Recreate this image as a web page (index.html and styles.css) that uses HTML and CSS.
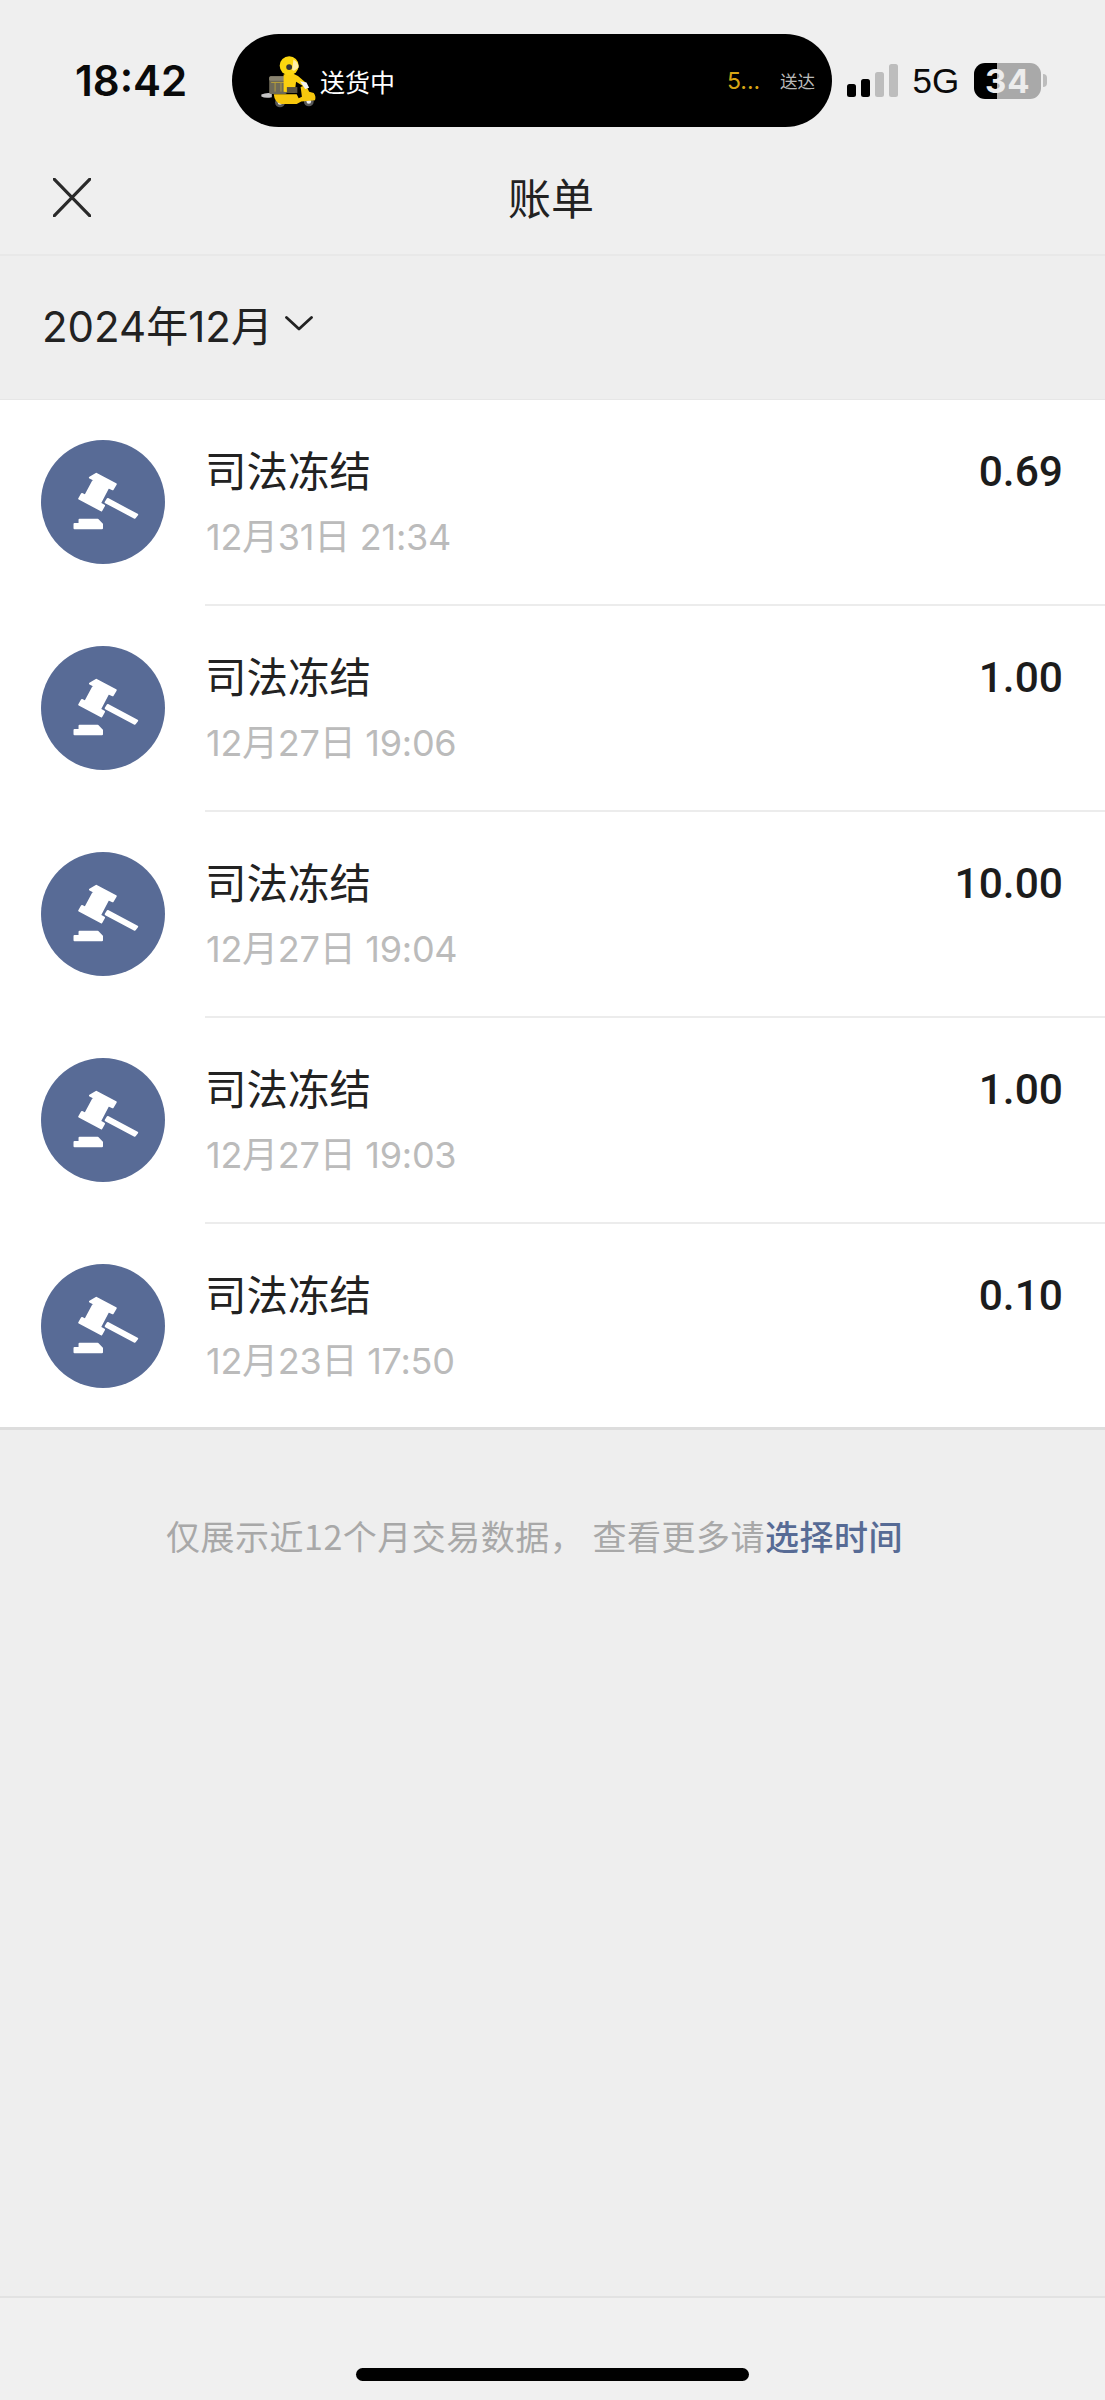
FILE: index.html
```html
<!DOCTYPE html>
<html lang="zh-CN">
<head>
<meta charset="utf-8">
<title>账单</title>
<link rel="stylesheet" href="styles.css">
</head>
<body>
<div class="page">
  <header class="top">
    <div class="status">
      <span class="clock">18:42</span>
      <div class="island">
        <svg class="rider" viewBox="55 95 175 165" aria-hidden="true">
          <path d="M58 219q14-7 32-4v12q-20 4-32-2z" fill="#c4c4c4"/>
          <rect x="82" y="163" width="54" height="54" rx="5" fill="#6e6a58"/>
          <rect x="82" y="163" width="54" height="14" rx="5" fill="#8a8470"/>
          <path d="M88 182h42M100 182v28M118 182v28" stroke="#b79f3a" stroke-width="3" fill="none"/>
          <circle cx="115" cy="243" r="15" fill="#585858"/>
          <circle cx="115" cy="243" r="7" fill="#ececec"/>
          <circle cx="203" cy="240" r="15" fill="#585858"/>
          <circle cx="203" cy="240" r="7" fill="#ececec"/>
          <path d="M100 218h66l6 12 10-4-4-30 16-6 10 20 14 4q8 10 4 22l-42 4-14 8h-48q-20-6-22-30z" fill="#f7c70d"/>
          <path d="M126 158q24-8 44 4l26 22-8 10-24-14-4 34-34-4z" fill="#fbd00f"/>
          <path d="M136 196h32v18h-32z" fill="#5a5340"/>
          <path d="M176 178l20 4 8 16-12 4z" fill="#f2f2f2"/>
          <circle cx="143" cy="131" r="29" fill="#fcd70f"/>
          <circle cx="143" cy="135" r="9" fill="#353535"/>
          <path d="M156 112q16 8 16 24l-14 10-6-2z" fill="#fff0a8"/>
        </svg>
        <span class="island-label">送货中</span>
        <span class="island-eta">5...</span>
        <span class="island-note">送达</span>
      </div>
      <div class="signal" aria-hidden="true">
        <i class="bar bar-1"></i><i class="bar bar-2"></i><i class="bar bar-3"></i><i class="bar bar-4"></i>
      </div>
      <span class="network">5G</span>
      <div class="battery"><span class="battery-level">34</span><i class="battery-cap"></i></div>
    </div>
    <nav class="nav">
      <svg class="close" viewBox="0 0 38 39" aria-hidden="true"><path d="M1 1l36 37M37 1L1 38"/></svg>
      <h1 class="nav-title">账单</h1>
    </nav>
  </header>

  <div class="month">
    <span class="month-label">2024年12月</span>
    <svg class="chevron" viewBox="0 0 28 15" aria-hidden="true"><path d="M1.5 1.5L14 13L26.5 1.5"/></svg>
  </div>

  <ul class="bills">
    <li class="bill">
      <svg class="badge" viewBox="0 0 370 370" aria-hidden="true"><use href="#gavel" width="370" height="370"/></svg>
      <div class="bill-body">
        <div class="bill-text"><span class="bill-name">司法冻结</span><span class="bill-time">12月31日 21:34</span></div>
        <span class="bill-amount">0.69</span>
      </div>
    </li>
    <li class="bill">
      <svg class="badge" viewBox="0 0 370 370" aria-hidden="true"><use href="#gavel" width="370" height="370"/></svg>
      <div class="bill-body">
        <div class="bill-text"><span class="bill-name">司法冻结</span><span class="bill-time">12月27日 19:06</span></div>
        <span class="bill-amount">1.00</span>
      </div>
    </li>
    <li class="bill">
      <svg class="badge" viewBox="0 0 370 370" aria-hidden="true"><use href="#gavel" width="370" height="370"/></svg>
      <div class="bill-body">
        <div class="bill-text"><span class="bill-name">司法冻结</span><span class="bill-time">12月27日 19:04</span></div>
        <span class="bill-amount">10.00</span>
      </div>
    </li>
    <li class="bill">
      <svg class="badge" viewBox="0 0 370 370" aria-hidden="true"><use href="#gavel" width="370" height="370"/></svg>
      <div class="bill-body">
        <div class="bill-text"><span class="bill-name">司法冻结</span><span class="bill-time">12月27日 19:03</span></div>
        <span class="bill-amount">1.00</span>
      </div>
    </li>
    <li class="bill">
      <svg class="badge" viewBox="0 0 370 370" aria-hidden="true"><use href="#gavel" width="370" height="370"/></svg>
      <div class="bill-body">
        <div class="bill-text"><span class="bill-name">司法冻结</span><span class="bill-time">12月23日 17:50</span></div>
        <span class="bill-amount">0.10</span>
      </div>
    </li>
  </ul>

  <p class="hint">仅展示近12个月交易数据， 查看更多请<a class="hint-link">选择时间</a></p>

  <footer class="foot"><i class="home-bar"></i></footer>
</div>

<!-- shared gavel badge -->
<svg class="defs" aria-hidden="true">
  <symbol id="gavel" viewBox="63 57 370 370">
    <circle cx="248" cy="242" r="185" fill="#586b96"/>
    <g fill="#fff" stroke="#fff" stroke-linejoin="round" stroke-width="6">
      <path d="M228 158l58 31-9 15-13-6-25 48 12 7-8 14-66-35 8-14 10 5 26-48-12-6z"/>
      <path d="M262 233l88 47-7 9-87-46z"/>
      <path d="M178 295h54l13 13v12h-82v-12h15z"/>
    </g>
  </symbol>
</svg>
</body>
</html>
```
FILE: styles.css
```css
* {
  box-sizing: border-box;
}

html,
body {
  margin: 0;
  padding: 0;
}

body {
  background: #eeeeee;
  font-family: "Inter", "Noto Sans CJK SC", sans-serif;
  color: #1c1c1c;
}

.page {
  display: flex;
  flex-direction: column;
  height: 2400px;
}

.defs {
  position: absolute;
  width: 0;
  height: 0;
}

/* status bar */
.top {
  background: #efefef;
  border-bottom: 2px solid #e8e8e8;
}

.status {
  display: flex;
  align-items: center;
  height: 161px;
  padding-left: 75px;
}

.clock {
  width: 157px;
  font-size: 42px;
  font-weight: 600;
  color: #0a0a0a;
  font-family: "Inter", sans-serif;
}

.island {
  display: flex;
  align-items: center;
  width: 600px;
  height: 93px;
  padding: 0 17px 0 28px;
  background: #000;
  border-radius: 47px;
  color: #fff;
}

.rider {
  width: 58px;
  height: 54px;
}

.island-label {
  margin-left: 2px;
  font-size: 25px;
  font-family: "Noto Sans CJK SC", sans-serif;
}

.island-eta {
  margin-left: auto;
  width: 53px;
  font-size: 23px;
  color: #d8a514;
}

.island-note {
  font-size: 17.5px;
  color: #b9b9b9;
  font-family: "Noto Sans CJK SC", sans-serif;
}

.signal {
  display: flex;
  align-items: flex-end;
  gap: 5.5px;
  height: 33px;
  margin: 0 0 0 15px;
}

.bar {
  display: block;
  width: 8.5px;
  border-radius: 2.5px;
}

.bar-1 { height: 13px; background: #000; }
.bar-2 { height: 18px; background: #000; }
.bar-3 { height: 25px; background: #bdbdbd; }
.bar-4 { height: 33px; background: #bdbdbd; }

.network {
  margin-left: 15px;
  font-size: 35px;
  line-height: 1;
  color: #0a0a0a;
  font-family: "Liberation Sans", sans-serif;
}

.battery {
  position: relative;
  margin-left: 15px;
  width: 67px;
  height: 36px;
}

.battery-level {
  display: block;
  height: 100%;
  border-radius: 11px;
  background: linear-gradient(90deg, #000 34%, #a9a9a9 34%);
  color: #ececec;
  font-size: 33px;
  line-height: 36px;
  font-weight: 700;
  text-align: center;
  letter-spacing: 1px;
}

.battery-cap {
  position: absolute;
  left: 69px;
  top: 11px;
  width: 4px;
  height: 13px;
  border-radius: 0 6px 6px 0;
  background: #bdbdbd;
}

/* title row */
.nav {
  display: flex;
  align-items: flex-start;
  justify-content: center;
  position: relative;
  height: 93px;
  padding-right: 3px;
}

.close {
  position: absolute;
  left: 53px;
  top: 17px;
  width: 38px;
  height: 39px;
}

.close path {
  fill: none;
  stroke: #2a2a2a;
  stroke-width: 3.2;
  stroke-linecap: round;
}

.nav-title {
  margin: 8px 0 0;
  font-size: 43px;
  line-height: 54px;
  font-weight: 400;
  color: #222;
  font-family: "Noto Sans CJK SC", sans-serif;
}

/* month picker */
.month {
  display: flex;
  align-items: center;
  height: 144px;
  padding-left: 42px;
  padding-bottom: 8px;
  border-bottom: 1px solid #e6e6e6;
}

.month-label {
  font-size: 42px;
  color: #222;
}

.chevron {
  width: 28px;
  height: 15px;
  margin-left: 12px;
}

.chevron path {
  fill: none;
  stroke: #222;
  stroke-width: 2.8;
  stroke-linecap: round;
  stroke-linejoin: round;
}

/* bill list */
.bills {
  list-style: none;
  margin: 0;
  padding: 0;
  background: #fff;
  border-bottom: 3px solid #dddddd;
}

.bill {
  display: flex;
  height: 206px;
  padding-left: 41px;
}

.bill:last-child {
  height: 203px;
}

.badge {
  flex: none;
  width: 124px;
  height: 124px;
  margin: 40px 40px 0 0;
}

.bill-body {
  flex: 1;
  display: flex;
  justify-content: space-between;
  padding: 42px 42px 0 0;
  border-bottom: 2px solid #ececec;
}

.bill:last-child .bill-body {
  border-bottom: 0;
}

.bill-text {
  display: flex;
  flex-direction: column;
}

.bill-name {
  font-size: 41.5px;
  line-height: 54px;
  color: #222;
  font-family: "Noto Sans CJK SC", sans-serif;
}

.bill-time {
  margin-top: 19px;
  padding-left: 1px;
  font-size: 36px;
  line-height: 44px;
  letter-spacing: -0.25px;
  color: #bbbbbb;
}

.bill-amount {
  padding-top: 3px;
  font-size: 42.5px;
  line-height: 54px;
  font-weight: 500;
  color: #1c1c1c;
  font-family: "Roboto", sans-serif;
}

/* footer */
.hint {
  margin: 82px 0 0;
  padding-right: 36px;
  text-align: center;
  font-size: 34px;
  line-height: 48px;
  letter-spacing: 0.5px;
  color: #a8a8a8;
  font-family: "Noto Sans CJK SC", sans-serif;
}

.hint-link {
  color: #576b95;
  font-weight: 500;
}

.foot {
  display: flex;
  justify-content: center;
  margin-top: auto;
  height: 104px;
  padding-top: 70px;
  background: #f0f0f0;
  border-top: 2px solid #e2e2e2;
}

.home-bar {
  display: block;
  width: 393px;
  height: 13px;
  border-radius: 7px;
  background: #000;
}
```
